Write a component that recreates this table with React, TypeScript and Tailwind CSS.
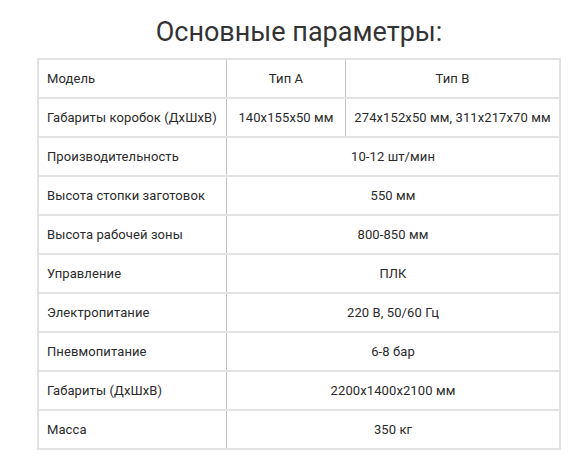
const rows: [string, string, string?][] = [
  ["Габариты коробок (ДхШхВ)", "140x155x50 мм", "274x152x50 мм, 311x217x70 мм"],
  ["Производительность", "10-12 шт/мин"],
  ["Высота стопки заготовок", "550 мм"],
  ["Высота рабочей зоны", "800-850 мм"],
  ["Управление", "ПЛК"],
  ["Электропитание", "220 В, 50/60 Гц"],
  ["Пневмопитание", "6-8 бар"],
  ["Габариты (ДхШхВ)", "2200x1400x2100 мм"],
  ["Масса", "350 кг"],
];

export default function App() {
  return (
    <div className="h-[463px] w-[572px] bg-white font-['Roboto',sans-serif] text-[#2a2a2a]">
      <div className="ml-[37px] w-[524px] pt-[14px]">
        <h1 className="text-center text-[27px] leading-[36px] font-normal text-[#333]">Основные параметры:</h1>
        <div className="mt-[8px] border-2 border-[#e2e2e2] text-[13px] tracking-[0.1px] whitespace-nowrap">
          <div className="grid h-[39px] grid-cols-[187px_119px_1fr] items-stretch border-b-2 border-[#e2e2e2]">
            <div className="flex items-center px-[8px]">Модель</div>
            <div className="flex items-center justify-center border-l border-[#c4c4c4]">Тип А</div>
            <div className="flex items-center justify-center border-l border-[#c4c4c4]">Тип В</div>
          </div>
          {rows.map(([label, a, b], i) => (
            <div
              key={label}
              className={`grid grid-cols-[187px_1fr] ${i < rows.length - 1 ? "h-[39px] border-b-2 border-[#e2e2e2]" : "h-[37px]"}`}
            >
              <div className="flex items-center px-[8px]">{label}</div>
              {b ? (
                <div className="grid grid-cols-[119px_1fr]">
                  <div className="flex items-center justify-center border-l border-[#c4c4c4]">{a}</div>
                  <div className="flex items-center justify-center border-l border-[#c4c4c4]">{b}</div>
                </div>
              ) : (
                <div className="flex items-center justify-center border-l border-[#c4c4c4]">{a}</div>
              )}
            </div>
          ))}
        </div>
      </div>
    </div>
  );
}
